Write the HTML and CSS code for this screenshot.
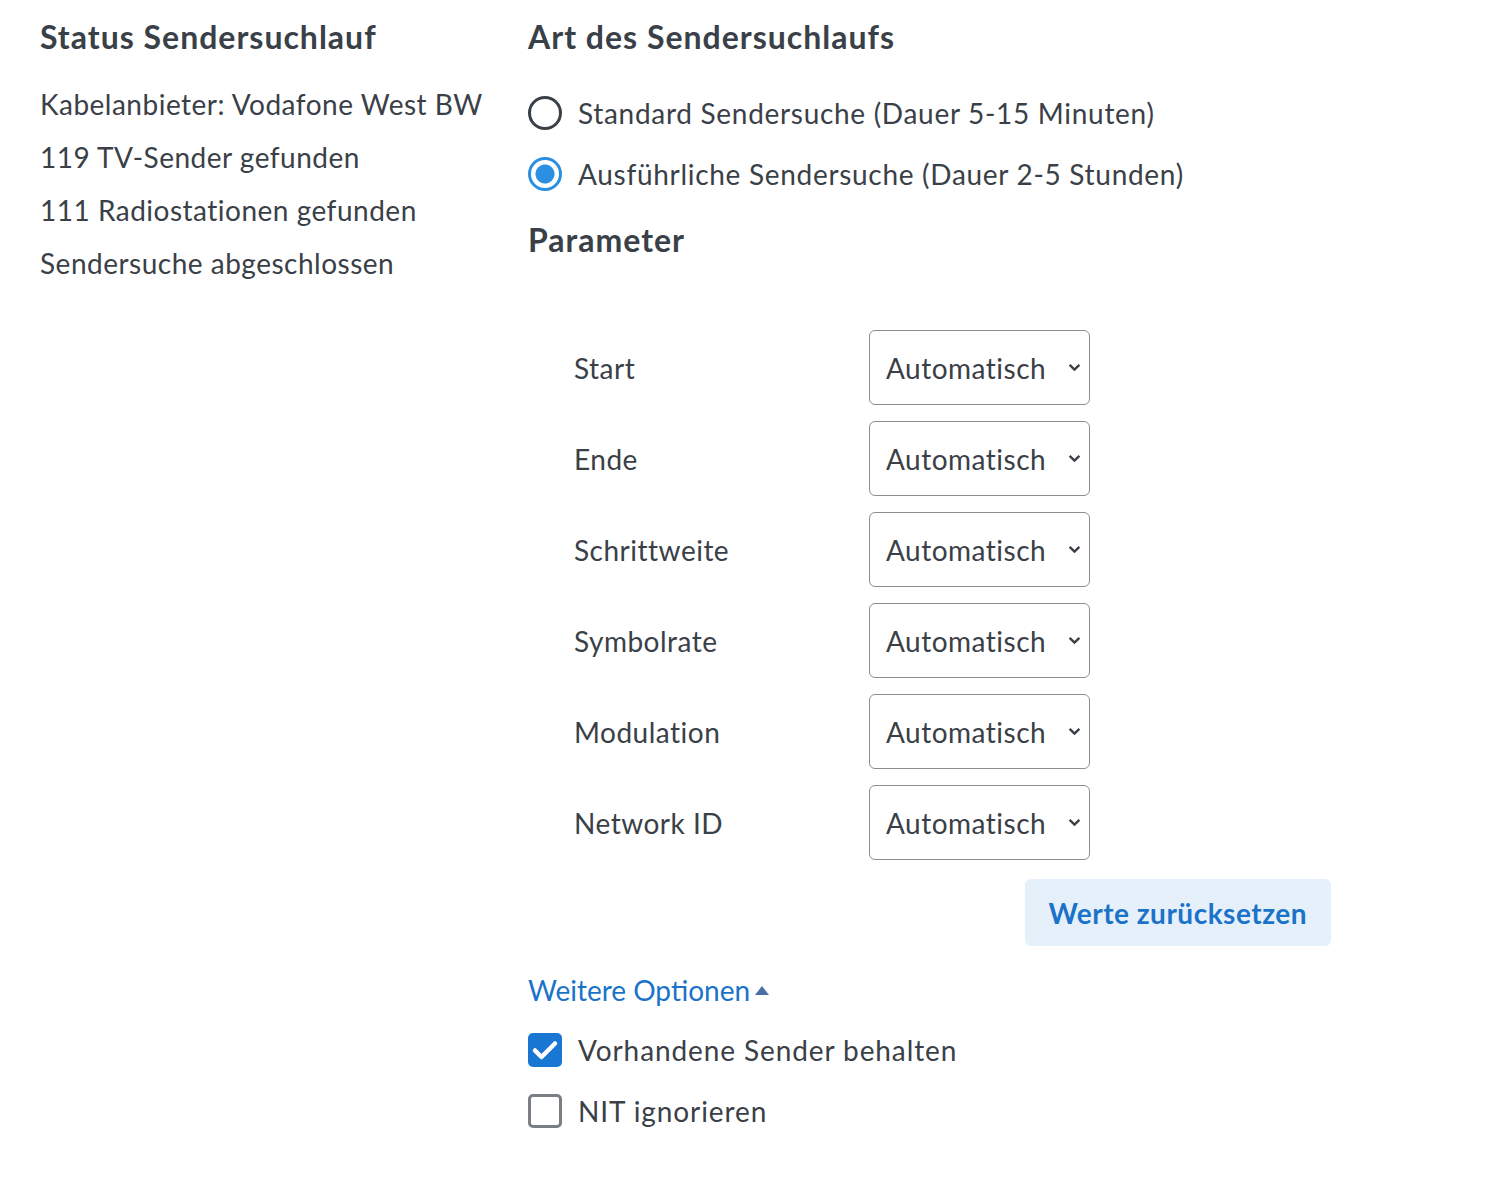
FILE: index.html
```html
<!DOCTYPE html>
<html lang="de">
<head>
    <meta charset="UTF-8" />
    <title>Sendersuchlauf</title>
    <link rel="stylesheet" href="styles.css">
</head>
<body>
    <div class="layout">
        <div class="status">
            <h2>Status Sendersuchlauf</h2>
            <ul class="status-list">
                <li>Kabelanbieter: Vodafone West BW</li>
                <li>119 TV-Sender gefunden</li>
                <li>111 Radiostationen gefunden</li>
                <li>Sendersuche abgeschlossen</li>
            </ul>
        </div>

        <div class="scan">
            <h2>Art des Sendersuchlaufs</h2>
            <label class="choice radio">
                <input type="radio" name="mode">
                <span>Standard Sendersuche (Dauer 5-15 Minuten)</span>
            </label>
            <label class="choice radio">
                <input type="radio" name="mode" checked>
                <span>Ausführliche Sendersuche (Dauer 2-5 Stunden)</span>
            </label>

            <h2 class="params-title">Parameter</h2>
            <div class="params">
                <div class="param-row">
                    <span class="param-label">Start</span>
                    <select><option>Automatisch</option></select>
                </div>
                <div class="param-row">
                    <span class="param-label">Ende</span>
                    <select><option>Automatisch</option></select>
                </div>
                <div class="param-row">
                    <span class="param-label">Schrittweite</span>
                    <select><option>Automatisch</option></select>
                </div>
                <div class="param-row">
                    <span class="param-label">Symbolrate</span>
                    <select><option>Automatisch</option></select>
                </div>
                <div class="param-row">
                    <span class="param-label">Modulation</span>
                    <select><option>Automatisch</option></select>
                </div>
                <div class="param-row">
                    <span class="param-label">Network ID</span>
                    <select><option>Automatisch</option></select>
                </div>
                <div class="button-row">
                    <button type="button" class="reset-button">Werte zurücksetzen</button>
                </div>
            </div>

            <a href="#" class="more-link">Weitere Optionen<span class="caret"></span></a>

            <label class="choice check">
                <input type="checkbox" checked>
                <span>Vorhandene Sender behalten</span>
            </label>
            <label class="choice check">
                <input type="checkbox">
                <span>NIT ignorieren</span>
            </label>
        </div>
    </div>
</body>
</html>
```

FILE: styles.css
```css
/* Seite */
body {
    margin: 0;
    padding: 0 40px;
    font-family: Lato, "Open Sans", sans-serif;
    font-size: 28px;
    letter-spacing: 0.5px;
    color: #3a4047;
    background: #fff;
}

.layout {
    display: grid;
    grid-template-columns: 488px 1fr;
}

h2 {
    font-size: 32px;
    font-weight: 700;
    letter-spacing: 1px;
    margin: 0;
    padding-top: 17px;
    line-height: 40px;
}

/* Status links */
.status-list {
    list-style: none;
    margin: 21px 0 0;
    padding: 0;
}

.status-list li {
    line-height: 53px;
}

/* Radio- und Checkboxen */
.choice {
    display: flex;
    align-items: center;
    gap: 16px;
    height: 61px;
}

.radio {
    letter-spacing: 0.7px;
}

.check {
    letter-spacing: 0.9px;
}

.scan h2 + .choice {
    margin-top: 25px;
}

.choice input {
    appearance: none;
    margin: 0;
    width: 34px;
    height: 34px;
    flex: none;
    box-sizing: border-box;
}

.choice input[type="radio"] {
    border: 3px solid #3a4047;
    border-radius: 50%;
}

.choice input[type="radio"]:checked {
    border-color: #2b8fe2;
    background: radial-gradient(circle, #2b8fe2 0 9px, #fff 10px);
}

.choice input[type="checkbox"] {
    border: 3px solid #7a7f85;
    border-radius: 5px;
}

.choice input[type="checkbox"]:checked {
    border: none;
    background: #1976d2 url("data:image/svg+xml,%3Csvg xmlns='http://www.w3.org/2000/svg' viewBox='0 0 34 34'%3E%3Cpath d='M7 17.5l6.5 6.5L27 10.5' fill='none' stroke='%23fff' stroke-width='4.5' stroke-linecap='round' stroke-linejoin='round'/%3E%3C/svg%3E") no-repeat center / 100%;
}

.params-title {
    padding-top: 16px;
}

/* Parameter Tabelle */
.params {
    width: 803px;
    margin-top: 70px;
    display: flex;
    flex-direction: column;
    gap: 16px;
}

.param-row {
    display: flex;
    align-items: center;
}

.param-label {
    width: 295px;
    padding-left: 46px;
}

select {
    appearance: none;
    width: 221px;
    height: 75px;
    padding: 0 16px;
    font-family: inherit;
    font-size: 28px;
    letter-spacing: 0.5px;
    color: #3a4047;
    border: 1px solid #8a8f95;
    border-radius: 6px;
    background: #fff url("data:image/svg+xml,%3Csvg xmlns='http://www.w3.org/2000/svg' viewBox='0 0 12 8'%3E%3Cpath d='M1.5 1.5L6 6l4.5-4.5' fill='none' stroke='%233a4047' stroke-width='2.2'/%3E%3C/svg%3E") no-repeat right 8px center / 13px 9px;
}

.button-row {
    display: flex;
    justify-content: flex-end;
    margin-top: 3px;
}

.reset-button {
    height: 67px;
    padding: 0 24px;
    font-family: inherit;
    font-size: 28px;
    font-weight: 700;
    letter-spacing: 0.5px;
    color: #1a73c9;
    background: #e6f0fa;
    border: none;
    border-radius: 6px;
    cursor: pointer;
}

/* Weitere Optionen */
.more-link {
    display: inline-flex;
    align-items: center;
    margin-top: 26px;
    margin-bottom: 11px;
    line-height: 36px;
    letter-spacing: 0;
    color: #1a73c9;
    text-decoration: none;
}

.caret {
    margin-left: 5px;
    border-left: 7px solid transparent;
    border-right: 7px solid transparent;
    border-bottom: 9px solid #4a6fa5;
}
```
